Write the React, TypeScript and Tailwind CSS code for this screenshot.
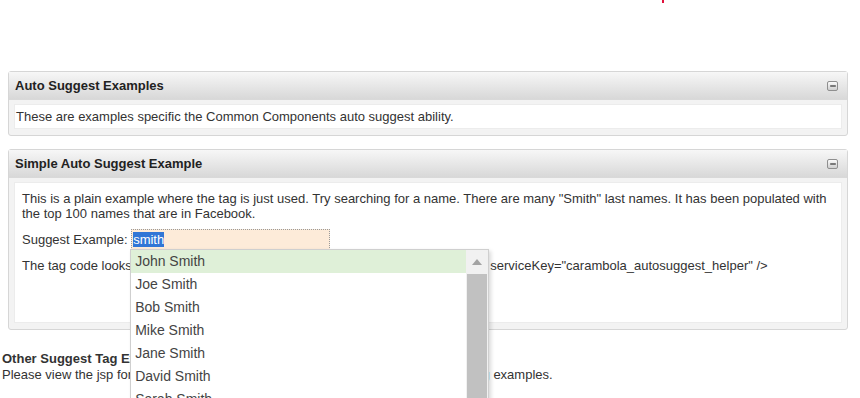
import { Minus } from "lucide-react"

const names = ["John Smith", "Joe Smith", "Bob Smith", "Mike Smith", "Jane Smith", "David Smith", "Sarah Smith", "Tom Smith"]

function Panel({ title, children, bodyClass }: { title: string; children: React.ReactNode; bodyClass: string }) {
  return (
    <div className="mx-[8px] w-[840px] rounded-[3px] border border-[#d6d6d6] bg-[#f3f3f3]">
      <div className="flex h-[28px] items-center justify-between border-b border-[#d9d9d9] bg-gradient-to-b from-[#f7f7f7] to-[#d8d8d8] pl-[6px] pr-[9px]">
        <span className="text-[13px] font-bold text-[#222]">{title}</span>
        <span className="flex h-[10px] w-[11px] items-center justify-center rounded-[2px] border border-[#8f8f8f] bg-gradient-to-b from-[#fafafa] to-[#cfcfcf]">
          <Minus className="h-[8px] w-[8px] text-[#555]" strokeWidth={4} />
        </span>
      </div>
      <div className="px-[5px] pb-[6px] pt-[4px]">
        <div className={`border border-[#ececec] bg-white ${bodyClass}`}>{children}</div>
      </div>
    </div>
  )
}

export default function App() {
  return (
    <div className="relative h-[398px] w-[860px] overflow-hidden bg-white font-['Liberation_Sans',Arial,sans-serif] text-[13px] text-[#333]">
      <div className="absolute left-[662px] top-0 h-[3px] w-[2px] bg-[#e0103c]" />
      <div className="pt-[71px]">
        <Panel title="Auto Suggest Examples" bodyClass="h-[25px] px-[1px] pt-[2px]">
          These are examples specific the Common Components auto suggest ability.
        </Panel>
        <div className="h-[13px]" />
        <Panel title="Simple Auto Suggest Example" bodyClass="h-[141px] px-[7px] pt-[8px]">
          <p className="leading-[15px]">
            This is a plain example where the tag is just used. Try searching for a name. There are many "Smith" last names. It has been populated with the top 100 names that are in Facebook.
          </p>
          <div className="mt-[8px] flex items-center">
            <span>Suggest Example:&nbsp;</span>
            <div className="relative">
              <div className="flex h-[21px] w-[199px] items-center border border-dotted border-[#9a9a9a] bg-[#fdebd9] pl-[1px] text-[13px]">
                <span className="bg-[#3176d6] leading-[15px] text-white">smith</span>
              </div>
              <div className="absolute left-[-1px] top-[20px] z-10 flex h-[160px] w-[359px] border border-[#cfcfcf] bg-white shadow-[2px_2px_4px_rgba(0,0,0,0.15)]">
                <ul className="flex-1 text-[14px] text-[#444]">
                  {names.map((n, i) => (
                    <li key={n} className={`flex h-[23px] items-center pl-[4px] ${i === 0 ? "bg-[#dff0d8]" : ""}`}>
                      {n}
                    </li>
                  ))}
                </ul>
                <div className="flex w-[22px] flex-col bg-[#f1f1f1]">
                  <div className="flex h-[24px] items-center justify-center">
                    <svg width="10" height="6" viewBox="0 0 10 6">
                      <path d="M0 6 L5 0 L10 6 Z" fill="#a3a3a3" />
                    </svg>
                  </div>
                  <div className="mx-[1px] flex-1 bg-[#c1c1c1]" />
                </div>
              </div>
            </div>
          </div>
          <p className="mt-[8px] leading-[15px]">
            The tag code looks like: &lt;carambola:autosuggest id="example" name="example" serviceKey="carambola_autosuggest_helper" /&gt;
          </p>
        </Panel>
      </div>
      <div className="ml-[2px] mt-[21px] leading-[16px]">
        <div className="font-bold">Other Suggest Tag Examples</div>
        <div>Please view the jsp for more information on how to use each of the other suggest tag examples.</div>
      </div>
    </div>
  )
}
